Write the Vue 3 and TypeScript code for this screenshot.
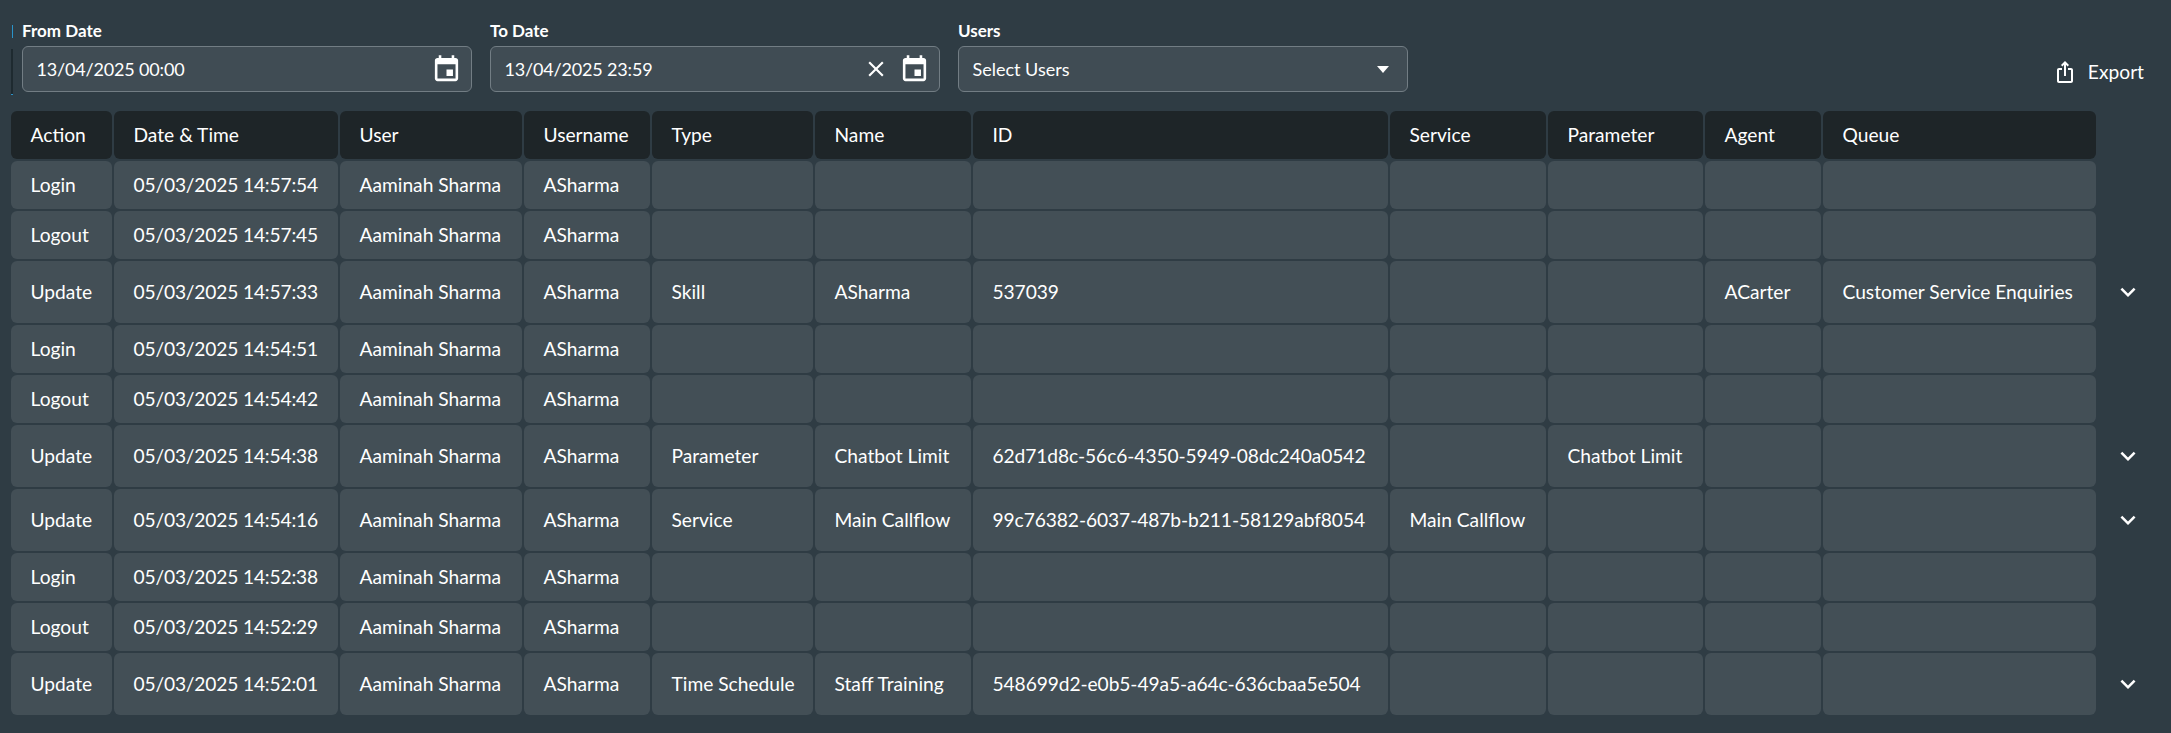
<script setup lang="ts">
interface Row {
  action: string
  time: string
  type?: string
  name?: string
  id?: string
  service?: string
  parameter?: string
  agent?: string
  queue?: string
}

const columns = ['Action', 'Date & Time', 'User', 'Username', 'Type', 'Name', 'ID', 'Service', 'Parameter', 'Agent', 'Queue']

const rows: Row[] = [
  { action: 'Login', time: '05/03/2025 14:57:54' },
  { action: 'Logout', time: '05/03/2025 14:57:45' },
  { action: 'Update', time: '05/03/2025 14:57:33', type: 'Skill', name: 'ASharma', id: '537039', agent: 'ACarter', queue: 'Customer Service Enquiries' },
  { action: 'Login', time: '05/03/2025 14:54:51' },
  { action: 'Logout', time: '05/03/2025 14:54:42' },
  { action: 'Update', time: '05/03/2025 14:54:38', type: 'Parameter', name: 'Chatbot Limit', id: '62d71d8c-56c6-4350-5949-08dc240a0542', parameter: 'Chatbot Limit' },
  { action: 'Update', time: '05/03/2025 14:54:16', type: 'Service', name: 'Main Callflow', id: '99c76382-6037-487b-b211-58129abf8054', service: 'Main Callflow' },
  { action: 'Login', time: '05/03/2025 14:52:38' },
  { action: 'Logout', time: '05/03/2025 14:52:29' },
  { action: 'Update', time: '05/03/2025 14:52:01', type: 'Time Schedule', name: 'Staff Training', id: '548699d2-e0b5-49a5-a64c-636cbaa5e504' }
]

function cells(r: Row): string[] {
  return [
    r.action,
    r.time,
    'Aaminah Sharma',
    'ASharma',
    r.type ?? '',
    r.name ?? '',
    r.id ?? '',
    r.service ?? '',
    r.parameter ?? '',
    r.agent ?? '',
    r.queue ?? ''
  ]
}

const calendarPath =
  'M17 12h-5v5h5v-5zM16 1v2H8V1H6v2H5c-1.11 0-1.99.9-1.99 2L3 19c0 1.1.89 2 2 2h14c1.1 0 2-.9 2-2V5c0-1.1-.9-2-2-2h-1V1h-2zm3 18H5V8h14v11z'
</script>

<template>
  <div class="page">
    <div class="toolbar">
      <span class="mark-top"></span>
      <span class="mark-side"></span>
      <div class="field">
        <label class="label">From Date</label>
        <div class="control">
          <span class="value digits">13/04/2025 00:00</span>
          <svg class="cal" viewBox="0 0 24 24"><path :d="calendarPath" /></svg>
        </div>
      </div>
      <div class="field">
        <label class="label">To Date</label>
        <div class="control">
          <span class="value digits">13/04/2025 23:59</span>
          <svg class="clear" viewBox="0 0 24 24">
            <path d="M19 6.41 17.59 5 12 10.59 6.41 5 5 6.41 10.59 12 5 17.59 6.41 19 12 13.41 17.59 19 19 17.59 13.41 12z" />
          </svg>
          <svg class="cal" viewBox="0 0 24 24"><path :d="calendarPath" /></svg>
        </div>
      </div>
      <div class="field">
        <label class="label">Users</label>
        <div class="control">
          <span class="value">Select Users</span>
          <svg class="caret" viewBox="0 0 12 7"><path d="M0 0h12L6 7z" /></svg>
        </div>
      </div>
      <div class="export">
        <svg class="share" viewBox="0 0 24 24">
          <path d="M16 5l-1.42 1.42-1.59-1.59V16h-1.98V4.83L9.42 6.42 8 5l4-4 4 4zm4 5v11c0 1.1-.9 2-2 2H6c-1.11 0-2-.9-2-2V10c0-1.11.89-2 2-2h3v2H6v11h12V10h-3V8h3c1.1 0 2 .89 2 2z" />
        </svg>
        <span class="export-text">Export</span>
      </div>
    </div>

    <div class="table">
      <div class="row head">
        <div v-for="c in columns" :key="c" class="cell">{{ c }}</div>
      </div>
      <div v-for="r in rows" :key="r.time" class="row" :class="{ tall: r.id }">
        <div v-for="(c, i) in cells(r)" :key="i" class="cell" :class="{ digits: i === 1, uid: i === 6 }">{{ c }}</div>
        <svg v-if="r.id" class="chevron" viewBox="0 0 24 24">
          <path d="M16.59 8.59 12 13.17 7.41 8.59 6 10l6 6 6-6z" />
        </svg>
      </div>
    </div>
  </div>
</template>

<style>
html,
body {
  margin: 0;
  background: #2f3c44;
}
</style>

<style scoped>
.page {
  width: 2171px;
  height: 733px;
  box-sizing: border-box;
  padding: 21px 27px 0 11px;
  background: #2f3c44;
  color: #fff;
  font-family: Lato, "Open Sans", sans-serif;
  overflow: hidden;
}

.toolbar {
  position: relative;
  display: flex;
  gap: 18px;
  padding-left: 11px;
  margin-bottom: 19px;
}

.mark-top {
  position: absolute;
  left: 1px;
  top: 4px;
  width: 1px;
  height: 13px;
  background: #2a93c9;
}

.mark-side {
  position: absolute;
  left: 0;
  top: 28px;
  width: 2px;
  height: 46px;
  background: #1e2a30;
  border-bottom: 1px solid #2a93c9;
  box-sizing: border-box;
}

.field {
  display: flex;
  flex-direction: column;
  width: 450px;
}

.label {
  font-size: 17px;
  font-weight: 700;
  line-height: 20px;
  margin-bottom: 5px;
}

.control {
  display: flex;
  align-items: center;
  height: 46px;
  box-sizing: border-box;
  padding: 0 9px 0 13.5px;
  background: #404c54;
  border: 1px solid #727d84;
  border-radius: 6px;
}

.value {
  flex: 1;
  font-size: 18px;
}

.digits {
  letter-spacing: -0.17px;
}

.uid {
  letter-spacing: -0.08px;
}

.cal {
  width: 31px;
  height: 31px;
  fill: #fff;
}

.clear {
  width: 26px;
  height: 26px;
  margin-right: 10px;
  fill: #fff;
}

.caret {
  width: 12px;
  height: 7px;
  margin-right: 9px;
  fill: #fff;
}

.export {
  display: flex;
  align-items: center;
  align-self: flex-end;
  height: 40px;
  margin-left: auto;
  gap: 11px;
  font-size: 19.2px;
}

.export-text {
  padding-bottom: 2px;
}

.share {
  width: 24px;
  height: 24px;
  fill: #fff;
}

.table {
  display: flex;
  flex-direction: column;
  gap: 2px;
}

.row {
  display: grid;
  grid-template-columns: 101px 224px 182px 126px 161px 156px 415px 156px 155px 116px 273px 48px;
  column-gap: 2px;
  height: 48px;
  align-items: stretch;
}

.row.tall {
  height: 62px;
}

.cell {
  display: flex;
  align-items: center;
  padding: 0 0 2px 19.5px;
  background: #434f56;
  border-radius: 6px;
  font-size: 19.2px;
  white-space: nowrap;
}

.head .cell {
  background: #1e2528;
}

.chevron {
  align-self: center;
  justify-self: start;
  width: 30px;
  height: 30px;
  margin-left: 15px;
  fill: #fff;
}
</style>
